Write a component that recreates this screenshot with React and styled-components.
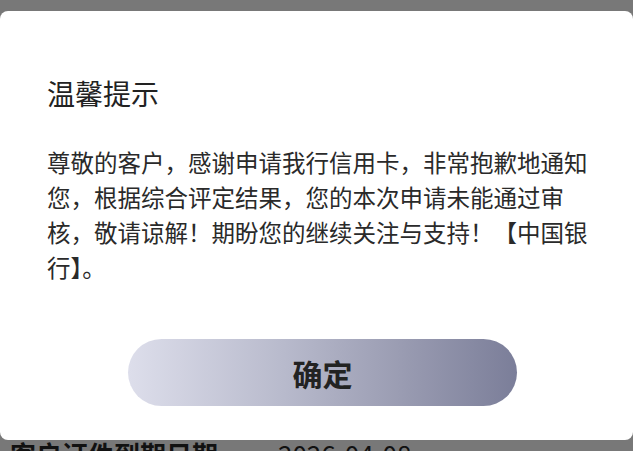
import React from "react";
import styled, { createGlobalStyle } from "styled-components";

const GlobalStyle = createGlobalStyle`
  html, body {
    margin: 0;
    padding: 0;
    background: #787878;
    overflow: hidden;
  }
  body {
    font-family: "Noto Sans CJK SC", "Noto Sans", sans-serif;
  }
`;

const Page = styled.div`
  width: 633px;
  height: 451px;
  display: flex;
  flex-direction: column;
  overflow: hidden;
  background: #787878;
`;

const TopShade = styled.div`
  height: 11px;
  flex-shrink: 0;
`;

const Dialog = styled.div`
  height: 429px;
  flex-shrink: 0;
  background: #ffffff;
  border-radius: 8px;
  box-sizing: border-box;
  padding: 63px 0 0 47px;
  display: flex;
  flex-direction: column;
`;

const Title = styled.h2`
  margin: 0;
  font-size: 28px;
  line-height: 39px;
  font-weight: 400;
  color: #222222;
`;

const Message = styled.p`
  margin: 32px 0 0;
  width: 545px;
  font-size: 23.5px;
  line-height: 35px;
  color: #2a2a2a;
`;

const ConfirmButton = styled.button`
  align-self: flex-start;
  margin: 54px 0 0 81px;
  width: 389px;
  height: 67px;
  border: none;
  border-radius: 34px;
  background: linear-gradient(90deg, #dddeeb 0%, #b8bacc 40%, #9a9cb2 70%, #7b7e99 100%);
  font-family: "Noto Sans CJK SC", sans-serif;
  font-size: 30px;
  font-weight: 700;
  color: #222222;
  cursor: pointer;
`;

const UnderRow = styled.div`
  display: flex;
  padding-left: 10px;
  margin-top: 1px;
  font-size: 26px;
  line-height: 26px;
  font-weight: 700;
  color: #111111;
  white-space: nowrap;
`;

const UnderLabel = styled.span`
  width: 268px;
`;

const UnderValue = styled.span`
  font-weight: 400;
`;

export default function App() {
  return (
    <>
      <GlobalStyle />
      <Page>
        <TopShade />
        <Dialog>
          <Title>温馨提示</Title>
          <Message>
            尊敬的客户，感谢申请我行信用卡，非常抱歉地通知您，根据综合评定结果，您的本次申请未能通过审核，敬请谅解！期盼您的继续关注与支持！【中国银行】。
          </Message>
          <ConfirmButton>确定</ConfirmButton>
        </Dialog>
        <UnderRow>
          <UnderLabel>客户证件到期日期</UnderLabel>
          <UnderValue>2026-04-08</UnderValue>
        </UnderRow>
      </Page>
    </>
  );
}
